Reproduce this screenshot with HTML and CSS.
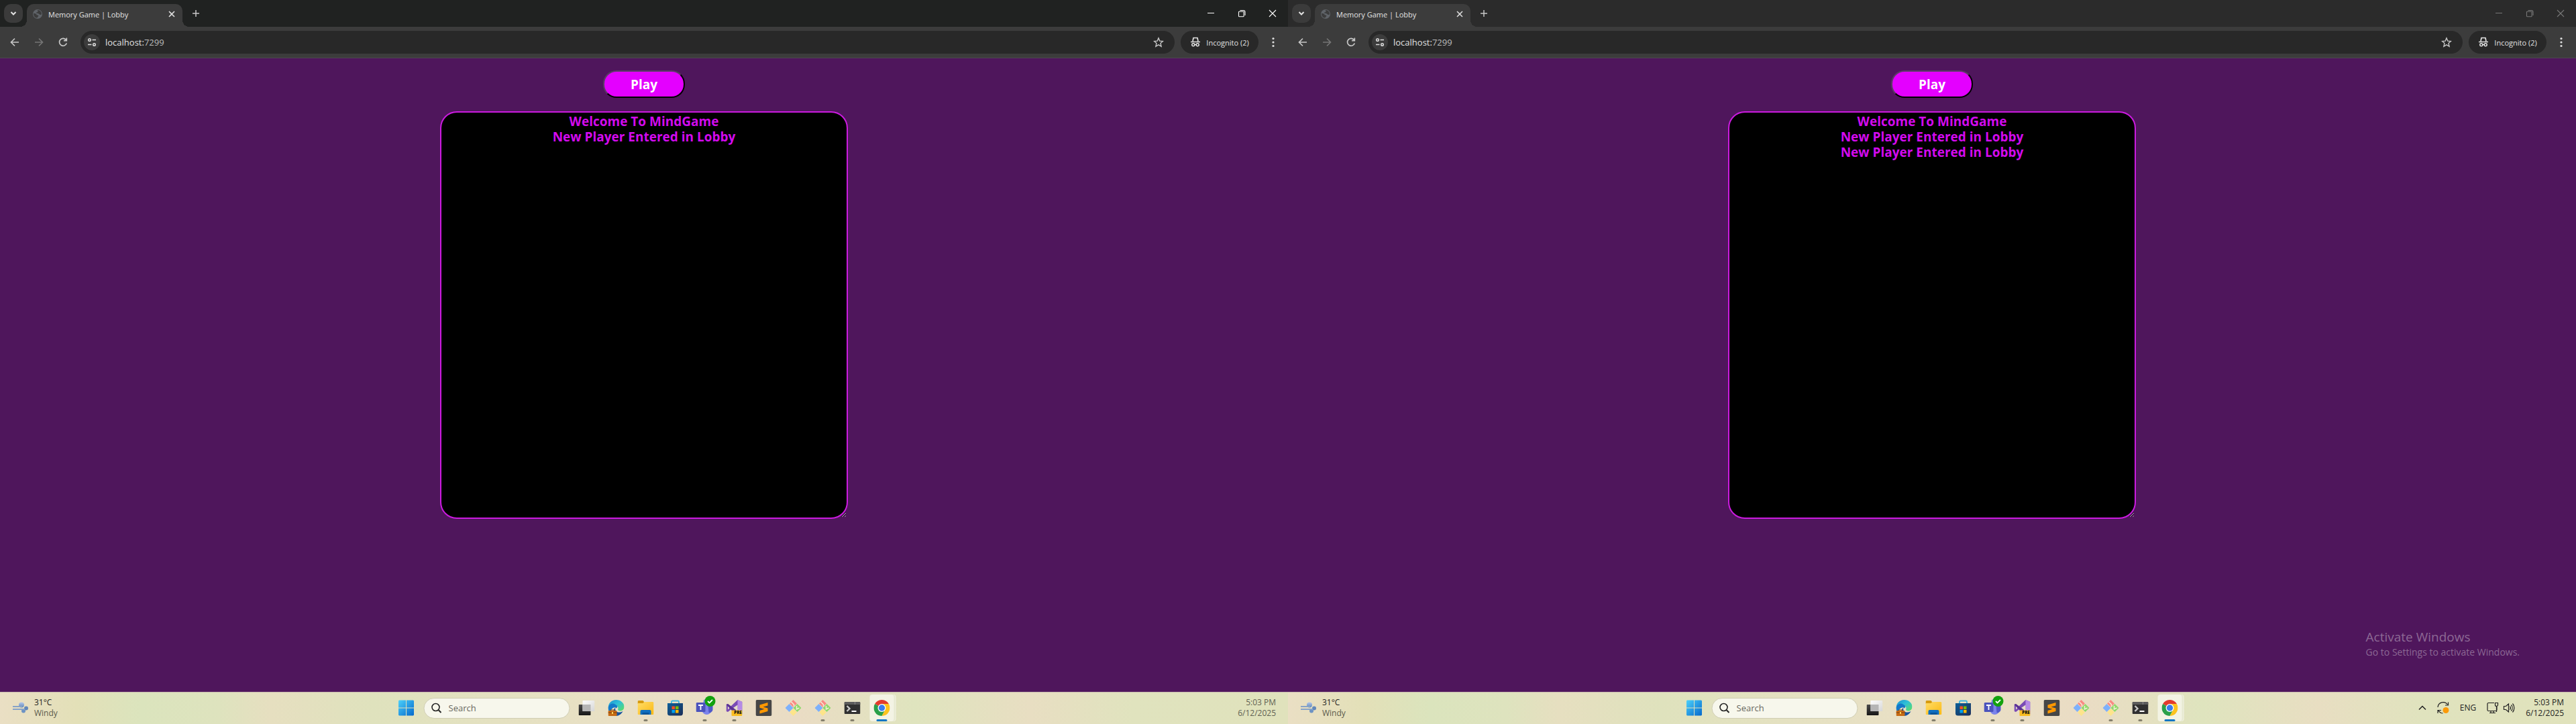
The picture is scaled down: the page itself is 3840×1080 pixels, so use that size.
FILE: index.html
```
<!DOCTYPE html>
<html lang="en">
<head>
<meta charset="utf-8">
<title>Memory Game | Lobby</title>
<link rel="stylesheet" href="styles.css">
</head>
<body>
<svg class="defs" aria-hidden="true">
  <defs>
    <linearGradient id="winG" x1="0" y1="0" x2="1" y2="1"><stop offset="0" stop-color="#4cd0fa"/><stop offset="1" stop-color="#0468cc"/></linearGradient>
    <linearGradient id="lightG" x1="0" y1="0" x2="1" y2="1"><stop offset="0" stop-color="#fdfdfd"/><stop offset="1" stop-color="#d6d6d6"/></linearGradient>
    <linearGradient id="darkG" x1="0" y1="0" x2="0" y2="1"><stop offset="0" stop-color="#4a4a4a"/><stop offset="1" stop-color="#161616"/></linearGradient>
    <linearGradient id="edgeG" x1="0" y1="0" x2="1" y2="1"><stop offset="0" stop-color="#1b8fd2"/><stop offset=".45" stop-color="#2fc0d8"/><stop offset="1" stop-color="#5fe05c"/></linearGradient>
    <linearGradient id="folderG" x1="0" y1="0" x2="1" y2="1"><stop offset="0" stop-color="#ffdc66"/><stop offset="1" stop-color="#fbb914"/></linearGradient>
    <linearGradient id="storeG" x1="0" y1="0" x2="1" y2="1"><stop offset="0" stop-color="#0d6099"/><stop offset="1" stop-color="#1b2d57"/></linearGradient>
    <linearGradient id="windG" x1="0" y1="0" x2="0" y2="1"><stop offset="0" stop-color="#b4c8ec"/><stop offset="1" stop-color="#5e86b8"/></linearGradient>
  </defs>
  <symbol id="i-down" viewBox="0 0 12 12"><path d="M2.500 4 6 7.500 9.500 4" fill="none" stroke="currentColor" stroke-width="2"/></symbol>
  <symbol id="i-globe" viewBox="0 0 16 16"><circle cx="8" cy="8" r="7" fill="#5f6368"/><path d="M2 7c2 0 3.500.2 4 1s.5 1.500 2 1.500 1.500 1 1 2-1.500 1-1.500 2.200C4 13.700 2 11 2 7zM8 2c-.5 1.500 1 1.500.5 2.500S6 5 6 6s1.500.7 2.500 1 2 .6 2.500 1.500 2 .5 3 0c.2-3.500-2-6.500-6-6.500z" fill="#3c3c3c"/></symbol>
  <symbol id="i-x" viewBox="0 0 12 12"><path d="m2 2 8 8M10 2l-8 8" fill="none" stroke="currentColor" stroke-width="1.600"/></symbol>
  <symbol id="i-plus" viewBox="0 0 12 12"><path d="M6 1v10M1 6h10" fill="none" stroke="currentColor" stroke-width="1.500"/></symbol>
  <symbol id="i-min" viewBox="0 0 12 12"><path d="M1 5.500h10" fill="none" stroke="currentColor"/></symbol>
  <symbol id="i-max" viewBox="0 0 12 12"><path d="M3.500 1.500h5a2.500 2.500 0 0 1 2.500 2.500v5M1.500 4a.8.8 0 0 1 .8-.8h6a.8.8 0 0 1 .8.8v6a.8.8 0 0 1-.8.8h-6a.8.8 0 0 1-.8-.8z" fill="none" stroke="currentColor" stroke-width="1.100"/></symbol>
  <symbol id="i-close" viewBox="0 0 12 12"><path d="m1 1 10 10M11 1 1 11" fill="none" stroke="currentColor" stroke-width="1.100"/></symbol>
  <symbol id="i-back" viewBox="0 0 16 16"><path d="M14 8H3M8 2.500 2.500 8 8 13.500" fill="none" stroke="currentColor" stroke-width="1.700"/></symbol>
  <symbol id="i-reload" viewBox="0 0 16 16"><path d="M13.300 9.500A5.500 5.500 0 1 1 12.800 5M13.300 1.500v4.200H9" fill="none" stroke="currentColor" stroke-width="1.700"/></symbol>
  <symbol id="i-tune" viewBox="0 0 14 14"><path d="M7.500 3.500H13M1 10.500h5.500" fill="none" stroke="currentColor" stroke-width="1.600"/><circle cx="3.500" cy="3.500" r="1.800" fill="none" stroke="currentColor" stroke-width="1.500"/><circle cx="10.500" cy="10.500" r="1.800" fill="none" stroke="currentColor" stroke-width="1.500"/></symbol>
  <symbol id="i-star" viewBox="0 0 16 16"><path d="m8 1.800 1.800 4.300 4.700.4L11 9.600l1.100 4.600L8 11.800l-4.100 2.400L5 9.600 1.500 6.500l4.700-.4z" fill="none" stroke="currentColor" stroke-width="1.400"/></symbol>
  <symbol id="i-spy" viewBox="0 0 16 16"><path d="M4 6.500 5 1.500h6l1 5M1 7.500h14" fill="none" stroke="currentColor" stroke-width="1.700"/><circle cx="4.800" cy="11.800" r="2" fill="none" stroke="currentColor" stroke-width="1.500"/><circle cx="11.200" cy="11.800" r="2" fill="none" stroke="currentColor" stroke-width="1.500"/><path d="M6.500 11.500h3" stroke="currentColor" stroke-width="1.400"/></symbol>
  <symbol id="i-dots" viewBox="0 0 16 16"><circle cx="8" cy="2.500" r="1.600" fill="currentColor"/><circle cx="8" cy="8" r="1.600" fill="currentColor"/><circle cx="8" cy="13.500" r="1.600" fill="currentColor"/></symbol>
  <symbol id="i-wind" viewBox="0 0 24 24"><circle cx="14" cy="7.500" r="4" fill="url(#windG)"/><circle cx="21" cy="12.500" r="3" fill="#6288ba"/><circle cx="17" cy="16.500" r="3" fill="#6d93c4"/><path d="M1 9h14v2H1zM1 13h18v2H1z" fill="#86a3c8"/></symbol>
  <symbol id="i-start" viewBox="0 0 24 24"><path d="M1.500.5h10v11H.500v-10zM12.500.5h10l1 1v10h-11zM.500 12.500h11v11h-10l-1-1zM12.500 12.500h11v10l-1 1h-10z" fill="url(#winG)"/></symbol>
  <symbol id="i-search" viewBox="0 0 16 16"><circle cx="7" cy="7" r="5.500" fill="none" stroke="#242424" stroke-width="1.600"/><path d="m11 11 4 4" stroke="#242424" stroke-width="2"/></symbol>
  <symbol id="i-task" viewBox="0 0 24 24"><rect x="0" y="7" width="18" height="16" rx="1" fill="url(#darkG)"/><rect x="6" y="1" width="18" height="16" rx="1" fill="url(#lightG)"/><path d="M6 7h12v10H6z" fill="#b5b5b5"/></symbol>
  <symbol id="i-edge" viewBox="0 0 24 24"><path d="M0 13C0 5 5 0 12 0s12 5 12 10c0 4-2.500 6.500-6 6.500-3 0-4-1.500-3.200-3 .7-1.500-.3-4.500-3.300-4.500C7 9 5 12 0 13z" fill="url(#edgeG)"/><path d="M0 12C1 6 7 4 11 7c4 2 3 4 1.500 5.500C9 9 3 14 4 20 1 18 0 15 0 12z" fill="#1479c9"/><path d="M11 11c-2 6 4 10 11 6-2 4-6 7-10 7-5 0-6-8-1-13z" fill="#15529f"/><rect x="0" y="16" width="13" height="8" rx="1" fill="#c66b15"/><path d="M0 19h13" stroke="#7d3e0a"/><path d="M4 16v-1h5v1" fill="none" stroke="#7d3e0a"/><path d="M5.500 18h2v3h-2z" fill="#ffd35a"/></symbol>
  <symbol id="i-folder" viewBox="0 0 24 24"><path d="M0 2.500A1.500 1.500 0 0 1 1.500 1H8l2 2.500L8 6H0z" fill="#d69a10"/><path d="M0 5h8l2-2h12.500A1.500 1.500 0 0 1 24 4.500v16a1.500 1.500 0 0 1-1.500 1.500h-21A1.500 1.500 0 0 1 0 20.500z" fill="url(#folderG)"/><path d="M4 22v-5a2 2 0 0 1 2-2h12a2 2 0 0 1 2 2v5z" fill="#0f6fc0"/><path d="M7 19h10v3H7z" fill="#0b5599"/></symbol>
  <symbol id="i-store" viewBox="0 0 24 24"><path d="M6.500 6V3a1.500 1.500 0 0 1 1.500-1.500h8A1.500 1.500 0 0 1 17.500 3v3" fill="none" stroke="#3fb6df" stroke-width="1.800"/><path d="M.5 5h23v15a3.500 3.500 0 0 1-3.500 3.500H4A3.500 3.500 0 0 1 .500 20z" fill="url(#storeG)"/><path d="M7 9.500h4.500V14H7z" fill="#f25022"/><path d="M12.500 9.500H17V14h-4.500z" fill="#7fba00"/><path d="M7 15h4.500v4.500H7z" fill="#00a4ef"/><path d="M12.500 15H17v4.500h-4.500z" fill="#ffb900"/></symbol>
  <symbol id="i-teams" viewBox="0 0 30 30"><circle cx="15" cy="9" r="4" fill="#7b83eb"/><path d="M9 12h14v9a7 7 0 0 1-14 0z" fill="#7b83eb"/><path d="M18 14h7v7a5 5 0 0 1-6 4z" fill="#5059c9"/><rect x="0" y="10" width="14" height="14" rx="1.500" fill="#4b53bc"/><path d="M3.500 14h7M7 14v7" stroke="#fff" stroke-width="1.800"/><circle cx="21" cy="8" r="8" fill="#13a10e"/><path d="m17.500 8 2.500 2.500 4.500-4.500" fill="none" stroke="#fff" stroke-width="1.800"/></symbol>
  <symbol id="i-vs" viewBox="0 0 24 24"><path d="m17 0 7 3v18l-7 3-10-9.500-4.500 3.500L0 17V7l2.500-1L7 9.500z" fill="#7a4bb5"/><path d="m17 0 7 3v18l-7 3z" fill="#b58ae6"/><path d="M2.500 9.500v5L5 12zM17 7.500 10.500 12l6.500 4.500z" fill="#e6dfcc"/><path d="M0 7l2.500-1 8 6L17 17v7L2.500 9.500z" fill="#5a3292"/><rect x="8" y="15.500" width="16" height="8.500" rx="1" fill="#f9bd22"/></symbol>
  <symbol id="i-sublime" viewBox="0 0 24 24"><rect width="24" height="24" rx="2" fill="#464646"/><path d="M18 4v4.500L11 10.500l7 2V17L6 20.500V16l7-2.300-7-2V7.500z" fill="#ff9800"/></symbol>
  <symbol id="i-git" viewBox="0 0 24 24"><path d="m12 0 5.500 5.500L12 11 6.500 5.500z" fill="#fa8a84"/><path d="M6 6l6 6-6 6-6-6z" fill="#7db0fb"/><path d="m18 6 6 6-6 6-6-6z" fill="#8fd96a"/><path d="m12 13 5.500 5.500L12 24l-5.500-5.500z" fill="#fde48a"/><path d="m9 3 4 4v3M17 9v5l4-2" fill="none" stroke="#f3ecd5" stroke-width="1.600"/></symbol>
  <symbol id="i-term" viewBox="0 0 24 24"><rect y="3" width="24" height="18" rx="1.500" fill="#303030"/><path d="M0 4.500A1.500 1.500 0 0 1 1.500 3h21A1.500 1.500 0 0 1 24 4.500V7H0z" fill="#5c5c5c"/><path d="M16 3v4" stroke="#888"/><path d="m4 9 4 4-4 4" fill="none" stroke="#c8c8c8" stroke-width="2.400"/><path d="M11 17h7" stroke="#fff" stroke-width="2"/></symbol>
  <symbol id="i-chrome" viewBox="0 0 24 24"><path d="M12 12 1.600 6a12 12 0 0 1 20.800 0z" fill="#e33b2e"/><path d="M12 12 1.600 6A12 12 0 0 0 12 24l5-9z" fill="#2aa04a"/><path d="M12 24A12 12 0 0 0 22.400 6H12l5 9z" fill="#fcc31e"/><circle cx="12" cy="12" r="6" fill="#fff"/><circle cx="12" cy="12" r="4.700" fill="#3b7ded"/></symbol>
  <symbol id="i-up" viewBox="0 0 12 12"><path d="m1 8.500 5-5 5 5" fill="none" stroke="#222" stroke-width="1.500"/></symbol>
  <symbol id="i-sync" viewBox="0 0 18 18"><path d="M1 8A8 8 0 0 1 15.500 4M16.500.5V5H12M1 17v-4.500h5M1.500 13l4 3.500 3 .5" fill="none" stroke="#222" stroke-width="1.200"/><circle cx="13" cy="12.500" r="4.500" fill="#fb9a09"/></symbol>
  <symbol id="i-net" viewBox="0 0 18 18"><path d="M11 1.500H2.500A1.500 1.500 0 0 0 1 3v9a1.500 1.500 0 0 0 1.500 1.500h11A1.500 1.500 0 0 0 15 12V7M6 14v2.500M10 14v2.500M4 16.500h9M12.500 1.500h4v3a2 2 0 0 1-4 0zM14.500 6.500V15" fill="none" stroke="#222" stroke-width="1.200"/></symbol>
  <symbol id="i-vol" viewBox="0 0 18 18"><path d="M1.500 6.500h3L8.500 3v12l-4-3.500h-3zM10.500 6.500a4 4 0 0 1 0 5M12.500 4.500a7 7 0 0 1 0 9M14.500 2.500a10 10 0 0 1 0 13" fill="none" stroke="#222" stroke-width="1.200"/></symbol>
</svg>

<div class="desktop">
  <section class="screen">
    <header class="tabstrip">
      <button class="tab-search" aria-label="Search tabs"><svg width="12" height="12"><use href="#i-down"/></svg></button>
      <div class="tab"><svg width="16" height="16"><use href="#i-globe"/></svg><span class="tab-title">Memory Game | Lobby</span><button class="icon-btn" aria-label="Close tab"><svg width="12" height="12"><use href="#i-x"/></svg></button></div>
      <button class="icon-btn new-tab" aria-label="New tab"><svg width="12" height="12"><use href="#i-plus"/></svg></button>
      <div class="win-controls">
        <button aria-label="Minimize"><svg width="12" height="12"><use href="#i-min"/></svg></button>
        <button aria-label="Restore"><svg width="12" height="12"><use href="#i-max"/></svg></button>
        <button aria-label="Close"><svg width="12" height="12"><use href="#i-close"/></svg></button>
      </div>
    </header>
    <nav class="toolbar">
      <button class="nav-btn" aria-label="Back"><svg width="16" height="16"><use href="#i-back"/></svg></button>
      <button class="nav-btn forward" aria-label="Forward"><svg width="16" height="16"><use href="#i-back"/></svg></button>
      <button class="nav-btn" aria-label="Reload"><svg width="16" height="16"><use href="#i-reload"/></svg></button>
      <div class="omnibox">
        <button class="site-info" aria-label="Site information"><svg width="14" height="14"><use href="#i-tune"/></svg></button>
        <span class="url">localhost:<span class="port">7299</span></span>
        <button class="icon-btn star" aria-label="Bookmark"><svg width="16" height="16"><use href="#i-star"/></svg></button>
      </div>
      <button class="incognito"><svg width="16" height="16"><use href="#i-spy"/></svg>Incognito (2)</button>
      <button class="icon-btn" aria-label="Menu"><svg width="16" height="16"><use href="#i-dots"/></svg></button>
    </nav>
    <main class="page">
      <button class="play">Play</button>
      <div class="lobby">
        <p>Welcome To MindGame</p>
        <p>New Player Entered in Lobby</p>
      </div>
    </main>
    <footer class="taskbar">
      <div class="weather"><svg width="24" height="24"><use href="#i-wind"/></svg><div><div class="temp">31°C</div><div>Windy</div></div></div>
      <div class="apps">
        <button class="app" aria-label="Start"><svg width="24" height="24"><use href="#i-start"/></svg></button>
        <label class="search"><svg width="16" height="16"><use href="#i-search"/></svg><input type="text" placeholder="Search" aria-label="Search"></label>
        <button class="app" aria-label="Task view"><svg width="24" height="24"><use href="#i-task"/></svg></button>
        <button class="app" aria-label="Edge"><svg width="24" height="24"><use href="#i-edge"/></svg></button>
        <button class="app running" aria-label="File Explorer"><svg width="24" height="24"><use href="#i-folder"/></svg></button>
        <button class="app" aria-label="Store"><svg width="24" height="24"><use href="#i-store"/></svg></button>
        <button class="app running" aria-label="Teams"><svg class="teams" width="30" height="30"><use href="#i-teams"/></svg></button>
        <button class="app running" aria-label="Visual Studio Preview"><svg width="24" height="24"><use href="#i-vs"/></svg><span class="pre">PRE</span></button>
        <button class="app" aria-label="Sublime Text"><svg width="24" height="24"><use href="#i-sublime"/></svg></button>
        <button class="app" aria-label="Git"><svg width="24" height="24"><use href="#i-git"/></svg></button>
        <button class="app running" aria-label="Git Bash"><svg width="24" height="24"><use href="#i-git"/></svg></button>
        <button class="app running" aria-label="Terminal"><svg width="24" height="24"><use href="#i-term"/></svg></button>
        <button class="app active" aria-label="Chrome"><svg width="24" height="24"><use href="#i-chrome"/></svg></button>
      </div>
      <div class="tray"><div class="clock"><div>5:03 PM</div><div>6/12/2025</div></div></div>
    </footer>
  </section>

  <section class="screen inactive">
    <header class="tabstrip">
      <button class="tab-search" aria-label="Search tabs"><svg width="12" height="12"><use href="#i-down"/></svg></button>
      <div class="tab"><svg width="16" height="16"><use href="#i-globe"/></svg><span class="tab-title">Memory Game | Lobby</span><button class="icon-btn" aria-label="Close tab"><svg width="12" height="12"><use href="#i-x"/></svg></button></div>
      <button class="icon-btn new-tab" aria-label="New tab"><svg width="12" height="12"><use href="#i-plus"/></svg></button>
      <div class="win-controls">
        <button aria-label="Minimize"><svg width="12" height="12"><use href="#i-min"/></svg></button>
        <button aria-label="Restore"><svg width="12" height="12"><use href="#i-max"/></svg></button>
        <button aria-label="Close"><svg width="12" height="12"><use href="#i-close"/></svg></button>
      </div>
    </header>
    <nav class="toolbar">
      <button class="nav-btn" aria-label="Back"><svg width="16" height="16"><use href="#i-back"/></svg></button>
      <button class="nav-btn forward" aria-label="Forward"><svg width="16" height="16"><use href="#i-back"/></svg></button>
      <button class="nav-btn" aria-label="Reload"><svg width="16" height="16"><use href="#i-reload"/></svg></button>
      <div class="omnibox">
        <button class="site-info" aria-label="Site information"><svg width="14" height="14"><use href="#i-tune"/></svg></button>
        <span class="url">localhost:<span class="port">7299</span></span>
        <button class="icon-btn star" aria-label="Bookmark"><svg width="16" height="16"><use href="#i-star"/></svg></button>
      </div>
      <button class="incognito"><svg width="16" height="16"><use href="#i-spy"/></svg>Incognito (2)</button>
      <button class="icon-btn" aria-label="Menu"><svg width="16" height="16"><use href="#i-dots"/></svg></button>
    </nav>
    <main class="page">
      <button class="play">Play</button>
      <div class="lobby">
        <p>Welcome To MindGame</p>
        <p>New Player Entered in Lobby</p>
        <p>New Player Entered in Lobby</p>
      </div>
      <div class="watermark"><div class="wm-title">Activate Windows</div><div class="wm-text">Go to Settings to activate Windows.</div></div>
    </main>
    <footer class="taskbar">
      <div class="weather"><svg width="24" height="24"><use href="#i-wind"/></svg><div><div class="temp">31°C</div><div>Windy</div></div></div>
      <div class="apps">
        <button class="app" aria-label="Start"><svg width="24" height="24"><use href="#i-start"/></svg></button>
        <label class="search"><svg width="16" height="16"><use href="#i-search"/></svg><input type="text" placeholder="Search" aria-label="Search"></label>
        <button class="app" aria-label="Task view"><svg width="24" height="24"><use href="#i-task"/></svg></button>
        <button class="app" aria-label="Edge"><svg width="24" height="24"><use href="#i-edge"/></svg></button>
        <button class="app running" aria-label="File Explorer"><svg width="24" height="24"><use href="#i-folder"/></svg></button>
        <button class="app" aria-label="Store"><svg width="24" height="24"><use href="#i-store"/></svg></button>
        <button class="app running" aria-label="Teams"><svg class="teams" width="30" height="30"><use href="#i-teams"/></svg></button>
        <button class="app running" aria-label="Visual Studio Preview"><svg width="24" height="24"><use href="#i-vs"/></svg><span class="pre">PRE</span></button>
        <button class="app" aria-label="Sublime Text"><svg width="24" height="24"><use href="#i-sublime"/></svg></button>
        <button class="app" aria-label="Git"><svg width="24" height="24"><use href="#i-git"/></svg></button>
        <button class="app running" aria-label="Git Bash"><svg width="24" height="24"><use href="#i-git"/></svg></button>
        <button class="app running" aria-label="Terminal"><svg width="24" height="24"><use href="#i-term"/></svg></button>
        <button class="app active" aria-label="Chrome"><svg width="24" height="24"><use href="#i-chrome"/></svg></button>
      </div>
      <div class="tray">
        <svg width="12" height="12"><use href="#i-up"/></svg>
        <svg width="18" height="18"><use href="#i-sync"/></svg>
        <span class="lang">ENG</span>
        <div class="status"><svg width="18" height="18"><use href="#i-net"/></svg><svg width="18" height="18"><use href="#i-vol"/></svg></div>
        <div class="clock"><div>5:03 PM</div><div>6/12/2025</div></div>
      </div>
    </footer>
  </section>
</div>
</body>
</html>
```
FILE: styles.css
```
* { box-sizing: border-box; }
body { margin: 0; font-family: "Open Sans", "Noto Sans", sans-serif; font-size: 12px; background: #4f165c; }
button { font: inherit; color: inherit; background: none; border: 0; padding: 0; display: flex; align-items: center; justify-content: center; flex-shrink: 0; }
svg { display: block; flex-shrink: 0; }
p { margin: 0; }
.defs { position: absolute; width: 0; height: 0; }
.desktop { display: grid; grid-template-columns: 1fr 1fr; min-height: 100vh; }
.screen { display: flex; flex-direction: column; min-width: 0; }

.tabstrip { display: flex; align-items: flex-start; height: 40px; padding: 6px 0 0 6px; background: #202221; color: #e3e3e3; }
.inactive .tabstrip { background: #2b2b2b; }
.tab-search { width: 28px; height: 28px; border-radius: 10px; background: #3b3b3b; }
.tab { position: relative; display: flex; align-items: center; gap: 8px; width: 232px; height: 34px; margin-left: 6px; padding: 0 10px 4px 8px; border-radius: 10px 10px 0 0; background: #3c3c3c; }
.tab::before, .tab::after { content: ""; position: absolute; bottom: 0; width: 10px; height: 10px; }
.tab::before { right: 100%; background: radial-gradient(circle at 0 0, transparent 10px, #3c3c3c 10px); }
.tab::after { left: 100%; background: radial-gradient(circle at 100% 0, transparent 10px, #3c3c3c 10px); }
.tab-title { flex: 1; font-size: 11px; white-space: nowrap; }
.icon-btn { color: #dedede; }
.new-tab { width: 40px; height: 28px; color: #c7c7c7; }
.win-controls { display: flex; margin-left: auto; color: #fff; }
.win-controls button { width: 46px; height: 28px; }
.inactive .win-controls { color: #777; }

.toolbar { display: flex; align-items: center; height: 47px; padding: 0 14px 0 4px; background: #3c3c3c; border-bottom: 1px solid #4d4650; color: #c7c7c7; }
.nav-btn { width: 36px; height: 34px; }
.forward { color: #757575; }
.forward svg { transform: scaleX(-1); }
.omnibox { display: flex; align-items: center; flex: 1; height: 34px; margin: 0 9px 0 8px; padding: 0 16px 0 5px; border-radius: 17px; background: #282828; }
.site-info { width: 24px; height: 24px; border-radius: 12px; background: #3c3c3c; color: #dedede; }
.url { flex: 1; padding-left: 8px; font-size: 13px; color: #e3e3e3; }
.port { color: #bdbdbd; }
.star { color: #c7c7c7; }
.incognito { gap: 8px; width: 116px; height: 34px; margin-right: 14px; border-radius: 17px; background: #282828; color: #e3e3e3; font-size: 11px; }

.page { position: relative; flex: 1; display: flex; flex-direction: column; align-items: center; gap: 20px; padding-top: 18px; background: #4f165c; font-family: "Open Sans", sans-serif; font-weight: 700; }
.play { width: 122px; height: 41px; border: 2px outset #000; border-color: #5b3d66 #1a0620 #1a0620 #5b3d66; border-radius: 20px; background: #e400ff; color: #fff; font-size: 19px; }
.lobby { width: 608px; height: 608px; padding: 2px; border: 2px solid #cc1ae0; border-radius: 25px; overflow: auto; resize: both; background: #000; color: #d30aee; font-size: 19px; line-height: 23px; text-align: center; }
.watermark { position: absolute; right: 84px; bottom: 49px; font-weight: 400; color: #8c6894; }
.wm-title { font-size: 19px; line-height: 26px; }
.wm-text { font-size: 14px; line-height: 20px; }

.taskbar { position: relative; display: flex; align-items: center; justify-content: space-between; height: 48px; padding: 0 18px 2px; border-top: 1px solid #c9b9b0; background: linear-gradient(90deg, #eadfc4 0, #e3e0b8 6%, #dbe4bd 11%, #dee3be 17%, #e6dfc0 21%, #dfe2bd 29%, #e9e0c5 48%, #eadcc4 62%, #dfe4be 71%, #e8dec2 80%, #e0e3be 88%, #e0e2bc 100%); color: #5a5a4c; line-height: 16px; }
.weather { display: flex; align-items: center; gap: 9px; }
.temp { color: #1c1c1c; }
.apps { position: absolute; left: 50%; top: 0; transform: translateX(-50%); display: flex; align-items: center; height: 46px; }
.app { position: relative; width: 44px; height: 40px; }
.search { display: flex; align-items: center; gap: 10px; width: 218px; height: 31px; margin: 0 3px 0 4px; padding: 0 10px; border: 1px solid #d0ceb4; border-radius: 16px; background: #f7f7ec; }
.search input { width: 160px; border: 0; padding: 0; outline: 0; background: none; font: inherit; font-size: 13px; }
.search input::placeholder { color: #66665e; opacity: 1; }
.running::after, .active::after { content: ""; position: absolute; left: 50%; bottom: 0; width: 6px; height: 3px; margin-left: -3px; border-radius: 2px; background: #85806d; }
.active { width: 36px; margin: 0 4px; border-radius: 4px; background: #f3f3e4; box-shadow: 2px 0 0 #e6e8d0, 3px 0 0 #f3f3e4; }
.active::after { width: 16px; margin-left: -8px; background: #1377c4; }
.teams { margin-top: -6px; margin-left: 4px; }
.pre { position: absolute; right: 11px; bottom: 9px; color: #111; font-size: 6px; font-weight: 800; line-height: 7px; }
.tray { display: flex; align-items: center; gap: 16px; color: #222; }
.status { display: flex; gap: 6px; }
.clock { text-align: right; color: #5f5f52; }
.inactive .clock { color: #222; }
```
